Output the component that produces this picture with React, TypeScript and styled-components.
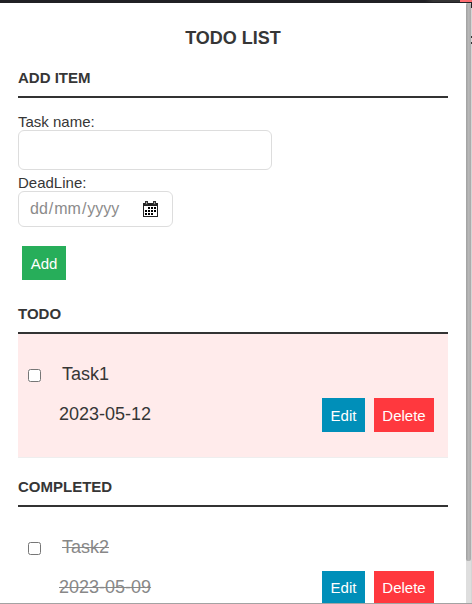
import React from "react";
import styled, { createGlobalStyle } from "styled-components";

const GlobalStyle = createGlobalStyle`
  * { box-sizing: border-box; }
  body {
    margin: 0;
    background: #fff;
    color: #363636;
    font-family: "Liberation Sans", Arial, sans-serif;
    font-size: 15px;
    line-height: 17px;
  }
`;

const Window = styled.div`
  display: grid;
  grid-template-columns: minmax(0, 1fr) 6px;
  grid-template-rows: 3px minmax(0, 1fr);
  height: 604px;
  overflow: hidden;
  border-bottom: 1px solid #a3a3a3;
`;

const TopEdge = styled.div`
  grid-column: 1 / -1;
  display: flex;
  justify-content: flex-end;
  background: linear-gradient(90deg, #202024 0 425px, #343434 433px);
  border-bottom: 1px solid #202024;
`;

const CloseTab = styled.div`
  width: 12px;
  height: 2px;
  background: #fd6c70;
`;

const Content = styled.main`
  padding: 25px 18px 0;
  overflow: hidden;
`;

const ScrollTrack = styled.div`
  display: grid;
  grid-template-columns: 5px 1px;
  background: #dedede;
`;

const ScrollThumb = styled.div`
  height: 558px;
  background: linear-gradient(90deg, #a0a0a0, #b7b7b7 50%, #aaa);
  border-radius: 2px;
`;

const WindowEdge = styled.div`
  background: linear-gradient(
    #222 0 5px, #d5d5d5 5px 33px, #333 33px 35px, #d5d5d5 35px 39px,
    #333 39px 41px, #d5d5d5 41px
  );
`;

const Title = styled.h1`
  margin: 0 0 21px;
  font-size: 18px;
  line-height: 20px;
  text-align: center;
`;

const Heading = styled.h2`
  height: 29px;
  margin: 0;
  border-bottom: 2px solid #333;
  font-size: 15px;
  line-height: 17px;
`;

const Form = styled.form`
  display: flex;
  flex-direction: column;
  align-items: flex-start;
  height: 207px;
  padding-top: 15px;
`;

const Label = styled.label``;

const TextInput = styled.input`
  width: 254px;
  height: 40px;
  margin-bottom: 4px;
  padding: 0 11px;
  border: 1px solid #ddd;
  border-radius: 6px;
  outline: none;
  font: inherit;
`;

const DateField = styled.div`
  display: flex;
  align-items: center;
  justify-content: space-between;
  width: 155px;
  height: 36px;
  margin-bottom: 19px;
  padding: 0 14px 0 10px;
  border: 1px solid #ddd;
  border-radius: 6px;
  color: #8b8b8b;
  font-size: 16px;
  line-height: 18px;
`;

const DatePart = styled.span`
  padding: 0 1px;
`;

const Button = styled.button<{ $tone: string; $width: number; $raise?: boolean }>`
  width: ${(p) => p.$width}px;
  height: 34px;
  padding: 0 0 ${(p) => (p.$raise ? 2 : 0)}px;
  border: 0;
  background: ${(p) => p.$tone};
  color: #fff;
  font: 15px/17px "Liberation Sans", Arial, sans-serif;
`;

const AddButton = styled(Button)`
  margin-left: 4px;
`;

const Item = styled.article<{ $late?: boolean }>`
  display: grid;
  grid-template-columns: 31px minmax(0, 1fr) auto;
  height: 124px;
  margin-bottom: 20px;
  padding: 30px 14px 0 10px;
  border-bottom: 1px solid #eee;
  background: ${(p) => (p.$late ? "#ffebeb" : "#fff")};
`;

const Check = styled.input`
  width: 13px;
  height: 13px;
  margin: 5px 0 0;
`;

const Details = styled.div<{ $done?: boolean }>`
  display: flex;
  flex-direction: column;
  gap: 20px;
  font-size: 18px;
  line-height: 20px;
  color: ${(p) => (p.$done ? "#888" : "#363636")};
  text-decoration: ${(p) => (p.$done ? "line-through" : "none")};
`;

const TaskName = styled.span`
  padding-left: 3px;
`;

const Actions = styled.div`
  display: flex;
  gap: 9px;
  padding-top: 34px;
`;

const CalendarIcon = () => (
  <svg width="15" height="16" viewBox="0 0 15 16" shapeRendering="crispEdges" aria-hidden="true">
    <path d="M0 2h15v14H0zM1 5v10h13V5z" fill="#222" fillRule="evenodd" />
    <path d="M2 0h3v4H2zM10 0h3v4h-3z" fill="#333" />
    <path d="M3 1h1v2H3zM11 1h1v2h-1z" fill="#999" />
    <path
      d="M5 6h2v2H5zM8 6h2v2H8zM11 6h2v2h-2zM2 9h2v2H2zM5 9h2v2H5zM8 9h2v2H8zM11 9h2v2h-2zM2 12h2v2H2zM5 12h2v2H5zM8 12h2v2H8z"
      fill="#000"
    />
  </svg>
);

interface TaskProps {
  name: string;
  date: string;
  late?: boolean;
  done?: boolean;
}

const Task = ({ name, date, late, done }: TaskProps) => (
  <Item $late={late}>
    <Check type="checkbox" aria-label={name} />
    <Details $done={done}>
      <TaskName>{name}</TaskName>
      <span>{date}</span>
    </Details>
    <Actions>
      <Button type="button" $tone="#008fb9" $width={43} $raise={done}>Edit</Button>
      <Button type="button" $tone="#ff383e" $width={60} $raise={done}>Delete</Button>
    </Actions>
  </Item>
);

export default function App() {
  return (
    <>
      <GlobalStyle />
      <Window>
        <TopEdge>
          <CloseTab />
        </TopEdge>
        <Content>
          <Title>TODO LIST</Title>
          <Heading>ADD ITEM</Heading>
          <Form>
            <Label htmlFor="task-name">Task name:</Label>
            <TextInput id="task-name" />
            <Label>DeadLine:</Label>
            <DateField>
              <span>
                <DatePart>dd</DatePart>/<DatePart>mm</DatePart>/<DatePart>yyyy</DatePart>
              </span>
              <CalendarIcon />
            </DateField>
            <AddButton type="button" $tone="#27ae5a" $width={44}>Add</AddButton>
          </Form>
          <Heading>TODO</Heading>
          <Task name="Task1" date="2023-05-12" late />
          <Heading>COMPLETED</Heading>
          <Task name="Task2" date="2023-05-09" done />
        </Content>
        <ScrollTrack>
          <ScrollThumb />
          <WindowEdge />
        </ScrollTrack>
      </Window>
    </>
  );
}
